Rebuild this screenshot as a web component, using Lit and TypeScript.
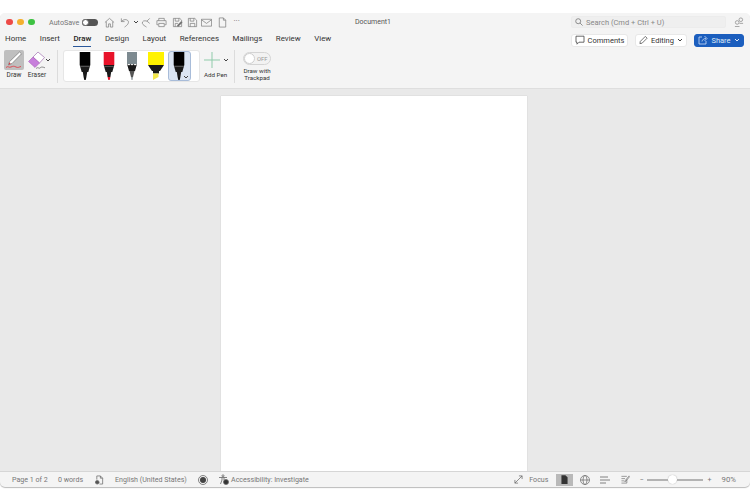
import { LitElement, html, css, svg } from "lit";
import { customElement } from "lit/decorators.js";

const TABS = ["Home", "Insert", "Draw", "Design", "Layout", "References", "Mailings", "Review", "View"];

const chevron = html`<svg class="chev" viewBox="0 0 6 4" width="6" height="4"><path d="M1 1l2 2 2-2" fill="none" stroke="currentColor" stroke-width="1"/></svg>`;

// 每支笔：笔身颜色 + 笔尖颜色
function pen(body: string, tip: string) {
  return html`<svg viewBox="0 0 14 28" width="14" height="28">
    <path d="M1.700 0h10.600v13H1.700z" fill=${body}/>
    <path d="M1.700 13h10.600l-2 7H3.700z" fill="#1a1a1a"/>
    <path d="M4.800 20h4.400l-.8 5H5.600z" fill="#1a1a1a"/>
    <path d="M5.600 25h2.800l-.7 3H6.300z" fill=${tip}/>
    <path d="M2.200 14.500h9.600" stroke="#777" stroke-width=".6"/>
  </svg>`;
}

const pencil = html`<svg viewBox="0 0 14 28" width="14" height="28">
  <path d="M2 0h10v12H2z" fill="#7d8a90"/>
  <path d="M2 12l2 1.500 1.500-1.500 1.500 1.500 1.500-1.500 1.500 1.500 2-1.500-2 7H4z" fill="#1a1a1a"/>
  <path d="M4.500 19h5l-1.500 6H6z" fill="#555"/>
  <path d="M6 25h2l-.5 3h-1z" fill="#8e989c"/>
</svg>`;

const marker = html`<svg viewBox="0 0 18 28" width="18" height="28">
  <path d="M1 0h16v13H1z" fill="#fff200"/>
  <path d="M1 13h16l-4 6H5z" fill="#1a1a1a"/>
  <path d="M6 19h6v2.500H6z" fill="#1a1a1a"/>
  <path d="M6 21.500h5.500v3.500L6 28z" fill="#f2e64a"/>
</svg>`;

const icons = {
  home: svg`<path d="M1 6l5-4.500 5 4.500M2.500 5v6h2.500V7.500h2V11h2.500V5" />`,
  undo: svg`<path d="M1.500 1.500v3.500h3.500M1.500 5c2-2.500 6-3 7.500-.5 1 2-1 4.500-4 6.500" />`,
  redo: svg`<path d="M9.500 1.500L6.500 4.500l3 2.500M6.500 4.500c-3-1-5.500 0-5 2.500.3 1.500 3 3 4.500 4" />`,
  print: svg`<path d="M3 4V1.500h6V4M2.500 8.500H1V4h10v4.500H9.500M3 7h6v3.500H3z" />`,
  saveAs: svg`<path d="M1.500 1.500h7l2 2v7h-9zM3.500 1.500v3h4v-3M3.500 10.500V7h3" /><path d="M6 9l4-4 1 1-4 4H6z" fill="#666"/>`,
  save: svg`<path d="M1.500 1.500h7l2 2v7h-9zM3.500 1.500v3h4v-3M3.500 10.500V7h5v3.500" />`,
  mail: svg`<path d="M.5 2.500h11v7.500H.5zM.5 3l5.500 4 5.500-4" />`,
  doc: svg`<path d="M2.500 1h4.500l2.500 2.500V11h-7zM7 1v2.500h2.500" />`,
};

function tool(name: keyof typeof icons) {
  return html`<svg class="qa" viewBox="0 0 12 12" width="11" height="11" fill="none" stroke="#777" stroke-width=".75">${icons[name]}</svg>`;
}

@customElement("app-root")
export class AppRoot extends LitElement {
  static styles = css`
    :host {
      display: block;
      width: 750px;
      height: 500px;
      background: #fff;
      font-family: "Roboto", "Liberation Sans", sans-serif;
      color: #333;
      overflow: hidden;
    }
    .window {
      margin-top: 13px;
      height: 474px;
      display: flex;
      flex-direction: column;
      border-radius: 5px;
      overflow: hidden;
      background: #f4f4f4;
      box-shadow: 0 1px 1px #bbb;
    }

    /* title bar */
    .titlebar {
      height: 17px;
      flex: none;
      position: relative;
      display: flex;
      align-items: center;
      padding: 1px 6px 0 6px;
      box-sizing: border-box;
    }
    .dot { width: 6.500px; height: 6.500px; border-radius: 50%; margin-right: 4.500px; flex: none; }
    .dot.r { background: #ed4a47; }
    .dot.y { background: #f4b02f; }
    .dot.g { background: #3ec243; }
    .autosave { font-size: 7.200px; color: #777; margin-left: 10px; width: 33px; }
    .switch {
      width: 16px; height: 7px; border-radius: 4px; background: #555;
      display: flex; align-items: center; flex: none;
    }
    .switch i { width: 7px; height: 7px; background: #fff; border-radius: 50%; box-sizing: border-box; border: 1px solid #666; }
    .quick { display: flex; align-items: center; margin-left: 5.500px; color: #666; }
    .qa { flex: none; }
    .gap { flex: none; }
    .more { font-size: 8px; color: #666; margin-left: 6px; line-height: 8px; margin-top: -3px; }
    .doc-title {
      position: absolute; left: 0; width: 746px; text-align: center;
      font-size: 7px; color: #555;
    }
    .search {
      margin-left: auto; width: 155px; height: 12px; box-sizing: border-box;
      background: #efefef; border: 1px solid #ececec; border-radius: 2px;
      display: flex; align-items: center; gap: 3px; padding-left: 3px;
      font-size: 7.500px; color: #888; z-index: 1;
    }
    .people { margin-left: 8px; flex: none; z-index: 1; }

    /* tabs row */
    .tabrow {
      height: 20px; flex: none; display: flex; align-items: center;
      padding: 0 6px 0 5px;
    }
    .tabs { display: flex; gap: 13.500px; align-self: stretch; }
    .tab { font-size: 7.900px; color: #333; line-height: 17px; height: 16px; }
    .tab.on { font-weight: 500; color: #222; border-bottom: 1.500px solid #2b579a; }
    .actions { margin-left: auto; display: flex; gap: 7px; }
    .btn {
      height: 13px; box-sizing: border-box; border-radius: 3px; background: #fff;
      border: 1px solid #e8e8e8; display: flex; align-items: center; justify-content: center;
      gap: 3px; font-size: 7.500px; color: #333;
    }
    .btn.comments { width: 57px; }
    .btn.editing { width: 52px; }
    .btn.share { width: 50px; background: #1b5ebe; border-color: #1b5ebe; color: #dfe9f7; }
    .chev { color: #444; flex: none; }
    .share .chev { color: #dfe9f7; }

    /* ribbon */
    .ribbon {
      height: 38px; flex: none; display: flex; align-items: flex-start;
      padding: 0 0 0 4px; box-sizing: border-box;
    }
    .tool { display: flex; flex-direction: column; align-items: center; width: 20px; }
    .tool .glyph { width: 20px; height: 20px; border-radius: 2px; display: flex; align-items: center; justify-content: center; }
    .tool.on .glyph { background: #bfbfbf; }
    .tool span { font-size: 6.500px; color: #333; margin-top: 1px; line-height: 8px; }
    .eraser { margin-left: 3px; }
    .side-chev { display: flex; margin: 8px 0 0 -2px; }
    .sep { width: 1px; height: 33px; background: #dcdcdc; flex: none; }
    .pens {
      margin-left: 5px; width: 137px; height: 32px; box-sizing: border-box; flex: none;
      background: #fff; border: 1px solid #e6e6e6; border-radius: 3px;
      display: flex; align-items: center; padding-left: 14px; gap: 9.500px;
    }
    .pen-slot { width: 14px; display: flex; justify-content: center; flex: none; position: relative; height: 30px; align-items: center; }
    .pen-slot.sel::before {
      content: ""; position: absolute; left: -4.500px; right: -4.500px; top: 0; bottom: 0;
      background: #dbe5f3; border: 1px solid #a8bcd9; border-radius: 3px;
    }
    .pen-slot svg { position: relative; flex: none; }
    .pen-slot .mini { position: absolute; right: -3px; bottom: 2px; color: #333; display: flex; }
    .addpen { margin-left: 4px; width: 30px; flex: none; }
    .addpen .line { display: flex; align-items: center; height: 20px; }
    .addpen > span { font-size: 6.200px; color: #333; margin-top: 1px; line-height: 8px; display: block; width: 22px; text-align: center; white-space: nowrap; }
    .addpen .chev { margin-left: 2.500px; }
    .trackpad { width: 44px; flex: none; display: flex; flex-direction: column; align-items: center; }
    .pill {
      width: 28px; height: 13px; box-sizing: border-box; margin-top: 2px;
      border: 1px solid #d4d4d4; border-radius: 7px; background: #f2f2f2;
      display: flex; align-items: center; font-size: 5.800px; color: #999; gap: 2px;
    }
    .pill i { width: 11px; height: 11px; border-radius: 50%; background: #fff; border: 1px solid #cfcfcf; box-sizing: border-box; }
    .trackpad span { font-size: 6.200px; line-height: 7.300px; text-align: center; color: #333; margin-top: 3px; }

    /* doc area */
    .canvas {
      flex: 1; background: #e9e9e9; border-top: 1px solid #dedede; min-height: 0;
      display: flex; justify-content: center; padding: 7px 2px 0 0; box-sizing: border-box;
      overflow: hidden;
    }
    .page { width: 306px; background: #fff; box-shadow: 0 0 1px #bbb; }

    /* status bar */
    .status {
      height: 16px; flex: none; border-top: 1px solid #d6d6d6; box-sizing: border-box;
      display: flex; align-items: center; font-size: 7.100px; color: #777;
      padding: 0 0 0 12px; white-space: nowrap;
    }
    .status svg { flex: none; }
    .w1 { width: 46px; }
    .w2 { width: 37px; }
    .w4 { width: 83px; margin-left: 11px; }
    .acc { margin-left: 2px; }
    .right { margin-left: auto; display: flex; align-items: center; padding-right: 14px; }
    .focus { margin: 0 8px 0 6px; }
    .view { width: 17px; height: 12px; display: flex; align-items: center; justify-content: center; }
    .view.on { background: #b9b9b9; }
    .slider { width: 56px; height: 2px; background: #b3b3b3; position: relative; margin: 0 4px; }
    .slider i { position: absolute; left: 21px; top: -3.500px; width: 9px; height: 9px; border-radius: 50%; background: #fff; box-shadow: 0 0 1px #999; }
    .zoom { margin-left: 10px; font-size: 7.800px; }
  `;

  render() {
    return html`
      <div class="window">
        <div class="titlebar">
          <i class="dot r"></i><i class="dot y"></i><i class="dot g"></i>
          <span class="autosave">AutoSave</span>
          <div class="switch"><i></i></div>
          <div class="quick">
            ${tool("home")}
            <span class="gap" style="width:5px"></span>${tool("undo")}
            <span class="gap" style="width:2px"></span>${chevron}
            <span class="gap" style="width:2px"></span>${tool("redo")}
            <span class="gap" style="width:4px"></span>${tool("print")}
            <span class="gap" style="width:5px"></span>${tool("saveAs")}
            <span class="gap" style="width:4px"></span>${tool("save")}
            <span class="gap" style="width:3px"></span>${tool("mail")}
            <span class="gap" style="width:5px"></span>${tool("doc")}
            <span class="more">···</span>
          </div>
          <div class="doc-title">Document1</div>
          <div class="search">
            <svg viewBox="0 0 9 9" width="8" height="8" fill="none" stroke="#777" stroke-width=".9"><circle cx="3.600" cy="3.600" r="2.800"/><path d="M5.700 5.700L8.500 8.500"/></svg>
            Search (Cmd + Ctrl + U)
          </div>
          <svg class="people" viewBox="0 0 11 11" width="10" height="10" fill="none" stroke="#888" stroke-width=".8"><circle cx="7.500" cy="3" r="2"/><circle cx="3.500" cy="6" r="2"/><path d="M1 10.500h5M6 7h4"/></svg>
        </div>

        <div class="tabrow">
          <div class="tabs">
            ${TABS.map((t) => html`<div class="tab ${t === "Draw" ? "on" : ""}">${t}</div>`)}
          </div>
          <div class="actions">
            <div class="btn comments">
              <svg viewBox="0 0 10 10" width="10" height="10" fill="none" stroke="#444" stroke-width=".8"><path d="M1 1.200h8v6H4l-2 2v-2H1z"/></svg>
              Comments
            </div>
            <div class="btn editing">
              <svg viewBox="0 0 10 10" width="9" height="10" fill="none" stroke="#444" stroke-width=".8"><path d="M1 9l.5-2.500L7 1l2 2-5.500 5.500z"/></svg>
              Editing ${chevron}
            </div>
            <div class="btn share">
              <svg viewBox="0 0 10 10" width="10" height="10" fill="none" stroke="#cfe0f7" stroke-width=".8"><path d="M4 2H1v7h7V6M4 6.500C4.300 4.500 6 3.500 8 3.500M6.500 1L9 3.500 6.500 6"/></svg>
              Share ${chevron}
            </div>
          </div>
        </div>

        <div class="ribbon">
          <div class="tool on">
            <div class="glyph">
              <svg viewBox="0 0 20 20" width="20" height="20">
                <path d="M15.500 2l2 1.800-9.500 9.700-3.500 1.500 1-3.300z" fill="#fff" stroke="#666" stroke-width=".6"/>
                <path d="M5.500 12.500l1.300 1.300-2.300 1z" fill="#e0303a"/>
                <path d="M2 17.500c2-2 3 .5 5-.5s3-1 5 0 3 0 5-.5" fill="none" stroke="#e0404a" stroke-width=".9"/>
              </svg>
            </div>
            <span>Draw</span>
          </div>
          <div class="tool eraser">
            <div class="glyph">
              <svg viewBox="0 0 20 20" width="20" height="20">
                <path d="M11 2l6.500 5.500-5 5.500L6 7z" fill="#fff" stroke="#a070b0" stroke-width=".7"/>
                <path d="M6 7l6.500 6-4.500 4.500L1.500 11.500z" fill="#c77fdb" stroke="#a050b0" stroke-width=".5"/>
                <path d="M9 18.500c2-2 3 .5 4-.5s2-1.500 5-.2" fill="none" stroke="#666" stroke-width=".7"/>
              </svg>
            </div>
            <span>Eraser</span>
          </div>
          <span class="side-chev">${chevron}</span>
          <i class="sep" style="margin-left:6px"></i>
          <div class="pens">
            <div class="pen-slot">${pen("#000", "#111")}</div>
            <div class="pen-slot">${pen("#e8132a", "#e8132a")}</div>
            <div class="pen-slot">${pencil}</div>
            <div class="pen-slot">${marker}</div>
            <div class="pen-slot sel">${pen("#000", "#111")}<span class="mini">${chevron}</span></div>
          </div>
          <div class="addpen">
            <div class="line">
              <svg viewBox="0 0 16 16" width="16" height="16"><path d="M8 0v16M0 8h16" stroke="#8fcbaa" stroke-width="1"/></svg>
              ${chevron}
            </div>
            <span>Add Pen</span>
          </div>
          <i class="sep"></i>
          <div class="trackpad">
            <div class="pill"><i></i>OFF</div>
            <span>Draw with<br />Trackpad</span>
          </div>
        </div>

        <div class="canvas"><div class="page"></div></div>

        <div class="status">
          <span class="w1">Page 1 of 2</span>
          <span class="w2">0 words</span>
          <svg viewBox="0 0 10 11" width="9" height="10" fill="none" stroke="#666" stroke-width=".8"><path d="M2 5V1h4l2.500 2.500V10H5M6 1v2.500h2.500"/><circle cx="2.500" cy="8" r="2" fill="#555"/></svg>
          <span class="w4">English (United States)</span>
          <svg viewBox="0 0 10 10" width="10" height="10"><circle cx="5" cy="5" r="4.500" fill="none" stroke="#666" stroke-width=".8"/><circle cx="5" cy="5" r="3" fill="#444"/></svg>
          <span class="gap" style="width:10px"></span>
          <svg viewBox="0 0 11 11" width="11" height="11" fill="none" stroke="#666" stroke-width=".8"><circle cx="5" cy="1.800" r="1"/><path d="M1 3.500h8M4 3.500V6L2.500 10M6 3.500V6"/><circle cx="8" cy="8" r="2.500" fill="#333"/></svg>
          <span class="acc">Accessibility: Investigate</span>
          <div class="right">
            <svg viewBox="0 0 10 10" width="9" height="9" fill="none" stroke="#666" stroke-width=".8"><path d="M1 9L9 1M5.500 1H9v3.500M1 5.500V9h3.500"/></svg>
            <span class="focus">Focus</span>
            <div class="view on"><svg viewBox="0 0 8 10" width="7" height="9"><path d="M.5 0h4.500L7.500 2.500V10H.5z" fill="#333"/></svg></div>
            <span class="gap" style="width:7px"></span>
            <svg viewBox="0 0 10 10" width="10" height="10" fill="none" stroke="#666" stroke-width=".7"><circle cx="5" cy="5" r="4.500"/><ellipse cx="5" cy="5" rx="2" ry="4.500"/><path d="M.5 5h9"/></svg>
            <span class="gap" style="width:10px"></span>
            <svg viewBox="0 0 10 8" width="10" height="8" fill="none" stroke="#666" stroke-width=".8"><path d="M0 1h8M0 4h10M0 7h6"/></svg>
            <span class="gap" style="width:11px"></span>
            <svg viewBox="0 0 10 10" width="9" height="9" fill="none" stroke="#666" stroke-width=".7"><path d="M.5 1.500h6M.5 4h4M.5 6.500h3M.5 9h6V5M4 7l5-6 .7.700-5 6z"/></svg>
            <span class="gap" style="width:9px"></span>
            <span>−</span>
            <div class="slider"><i></i></div>
            <span>+</span>
            <span class="zoom">90%</span>
          </div>
        </div>
      </div>
    `;
  }
}
